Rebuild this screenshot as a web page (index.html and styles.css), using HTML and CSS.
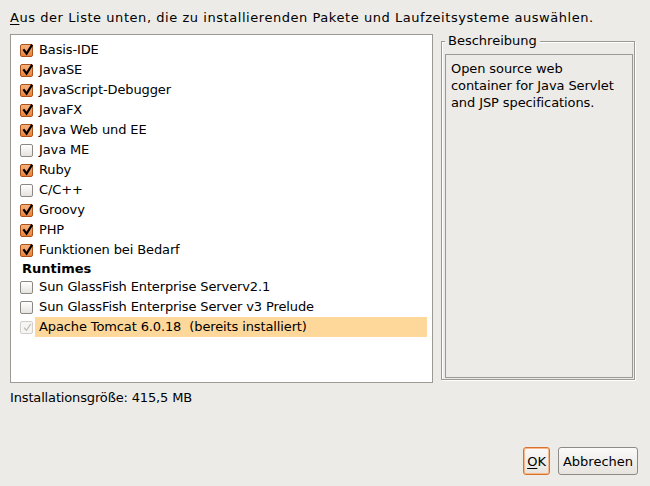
FILE: index.html
```html
<!DOCTYPE html>
<html lang="de">
<head>
<meta charset="utf-8">
<title>Installation</title>
<link rel="stylesheet" href="styles.css">
</head>
<body>
<div class="dialog">
  <div class="prompt"><u>A</u>us der Liste unten, die zu installierenden Pakete und Laufzeitsysteme auswählen.</div>
  <div class="main">
    <div class="list">
      <div class="row"><span class="cb on"><svg viewBox="0 0 13 13"><path d="M3 6.2 L5.6 9.6 L10.6 1.6"/></svg></span><span class="label">Basis-IDE</span></div>
      <div class="row"><span class="cb on"><svg viewBox="0 0 13 13"><path d="M3 6.2 L5.6 9.6 L10.6 1.6"/></svg></span><span class="label">JavaSE</span></div>
      <div class="row"><span class="cb on"><svg viewBox="0 0 13 13"><path d="M3 6.2 L5.6 9.6 L10.6 1.6"/></svg></span><span class="label">JavaScript-Debugger</span></div>
      <div class="row"><span class="cb on"><svg viewBox="0 0 13 13"><path d="M3 6.2 L5.6 9.6 L10.6 1.6"/></svg></span><span class="label">JavaFX</span></div>
      <div class="row"><span class="cb on"><svg viewBox="0 0 13 13"><path d="M3 6.2 L5.6 9.6 L10.6 1.6"/></svg></span><span class="label">Java Web und EE</span></div>
      <div class="row"><span class="cb"></span><span class="label">Java ME</span></div>
      <div class="row"><span class="cb on"><svg viewBox="0 0 13 13"><path d="M3 6.2 L5.6 9.6 L10.6 1.6"/></svg></span><span class="label">Ruby</span></div>
      <div class="row"><span class="cb"></span><span class="label">C/C++</span></div>
      <div class="row"><span class="cb on"><svg viewBox="0 0 13 13"><path d="M3 6.2 L5.6 9.6 L10.6 1.6"/></svg></span><span class="label">Groovy</span></div>
      <div class="row"><span class="cb on"><svg viewBox="0 0 13 13"><path d="M3 6.2 L5.6 9.6 L10.6 1.6"/></svg></span><span class="label">PHP</span></div>
      <div class="row"><span class="cb on"><svg viewBox="0 0 13 13"><path d="M3 6.2 L5.6 9.6 L10.6 1.6"/></svg></span><span class="label">Funktionen bei Bedarf</span></div>
      <div class="group">Runtimes</div>
      <div class="row"><span class="cb"></span><span class="label">Sun GlassFish Enterprise Serverv2.1</span></div>
      <div class="row"><span class="cb"></span><span class="label">Sun GlassFish Enterprise Server v3 Prelude</span></div>
      <div class="row"><span class="cb dis"><svg viewBox="0 0 13 13"><path d="M3 6.6 L5.4 9.4 L9.8 3"/></svg></span><span class="label sel">Apache Tomcat 6.0.18&nbsp; (bereits installiert)</span></div>
    </div>
    <fieldset class="desc">
      <legend>Beschreibung</legend>
      <div class="desc-box">Open source web container for Java Servlet and JSP specifications.</div>
    </fieldset>
  </div>
  <div class="size">Installationsgröße: 415,5 MB</div>
  <div class="buttons">
    <button class="btn default"><u>O</u>K</button>
    <button class="btn">Abbrechen</button>
  </div>
</div>
</body>
</html>
```

FILE: styles.css
```css
html, body {
  margin: 0;
  padding: 0;
  background: #edebe8;
}
body {
  font-family: "DejaVu Sans", "Liberation Sans", sans-serif;
  font-size: 13px;
  color: #000;
}
.dialog {
  box-sizing: border-box;
  height: 486px;
  padding: 10px 12px 11px 10px;
  display: flex;
  flex-direction: column;
}
.prompt {
  line-height: 16px;
  white-space: nowrap;
  letter-spacing: 0.55px;
}
.prompt u, .btn u {
  text-decoration: underline;
  text-underline-offset: 2px;
}
.main {
  margin-top: 8px;
  display: flex;
  align-items: flex-start;
}
.list {
  box-sizing: border-box;
  width: 423px;
  height: 349px;
  border: 1px solid #9c9893;
  background: #fff;
  padding: 5px 5px 0 9px;
}
.row {
  height: 20px;
  display: flex;
  align-items: center;
}
.cb {
  box-sizing: border-box;
  flex: none;
  width: 13px;
  height: 13px;
  border: 1px solid #8c8883;
  border-radius: 2px;
  background: linear-gradient(#ffffff, #e6e3df);
  position: relative;
}
.cb svg {
  position: absolute;
  left: 0;
  top: -1px;
  width: 13px;
  height: 13px;
  overflow: visible;
}
.cb path {
  fill: none;
  stroke: #000;
  stroke-width: 2.2;
  stroke-linecap: square;
  stroke-linejoin: miter;
}
.cb.on {
  border-color: #a9521c;
  background: linear-gradient(#f7b27a, #e9823d);
}
.cb.dis {
  border-color: #d2cfca;
  background: #f6f5f3;
}
.cb.dis path {
  stroke: #b9b6b1;
  stroke-width: 1.1;
  stroke-linecap: butt;
}
.label {
  flex: 1;
  margin-left: 2px;
  padding-left: 4px;
  height: 20px;
  line-height: 20px;
  white-space: nowrap;
  letter-spacing: -0.12px;
}
.label.sel {
  background: #fed79b;
}
.group {
  height: 17px;
  line-height: 17px;
  font-weight: bold;
  padding-left: 2px;
}
.desc {
  box-sizing: border-box;
  margin: 0 0 0 8px;
  width: 194px;
  height: 346px;
  padding: 6px 1px 1px 3px;
  border: 1px solid #9c9893;
  box-shadow: 1px 1px 0 #ffffff, inset 1px 1px 0 #ffffff;
  min-width: 0;
  display: flex;
  flex-direction: column;
}
.desc legend {
  padding: 0 3px;
  margin: 0;
  line-height: 14px;
  background: #edebe8;
}
.desc-box {
  box-sizing: border-box;
  flex: 1;
  width: 188px;
  border: 1px solid #9c9893;
  padding: 5px 5px 0 5px;
  line-height: 17px;
  letter-spacing: -0.1px;
}
.size {
  margin-top: 7px;
  line-height: 16px;
  letter-spacing: -0.15px;
}
.buttons {
  margin-top: auto;
  display: flex;
  justify-content: flex-end;
  gap: 8px;
}
.btn {
  box-sizing: border-box;
  height: 28px;
  padding: 0 4px;
  font-family: "DejaVu Sans", "Liberation Sans", sans-serif;
  font-size: 13px;
  color: #000;
  border: 1px solid #8e8a85;
  border-radius: 3px;
  background: linear-gradient(#fbfaf9, #e7e4df);
}
.btn.default {
  padding: 0 3px;
  border: 1px solid #d9702b;
  box-shadow: inset 0 0 0 1px #f7b789;
}
```
